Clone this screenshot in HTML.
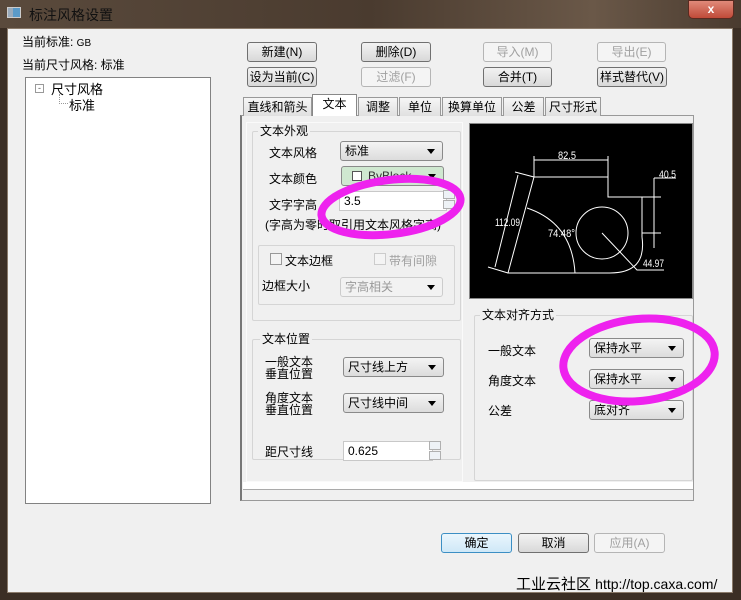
<!DOCTYPE html>
<html><head><meta charset="utf-8"><style>
*{box-sizing:border-box;margin:0;padding:0}
body{width:741px;height:600px;overflow:hidden;background:#3b2e24;font-family:"Liberation Sans","Noto Sans CJK SC",sans-serif;font-size:12px;color:#000;position:relative}
.a{position:absolute}
.title{left:0;top:0;width:741px;height:28px;background:linear-gradient(90deg,#5a4a3c,#4a3b2f 50%,#6a5848 80%,#4a3b2f)}
.client{left:7px;top:28px;width:726px;height:565px;background:#f0f0f0;border:1px solid #8a7a6a}
.btn{position:absolute;height:20px;border:1px solid #707070;border-radius:3px;background:linear-gradient(#f2f2f2,#e6e6e6 50%,#d8d8d8);text-align:center;line-height:18px;font-size:12px}
.dis{color:#a0a0a0;border-color:#b5b5b5;background:#f4f4f4}
.tab{position:absolute;top:97px;height:19px;border:1px solid #999;border-bottom:none;background:linear-gradient(#f6f6f6,#e0e0e0);text-align:center;line-height:18px}
.grp{position:absolute;border:1px solid #d5d5d5;border-radius:2px}
.lg{position:absolute;background:#f0f0f0;padding:0 2px;line-height:14px}
.cb{position:absolute;height:20px;border:1px solid #8a8a8a;border-radius:3px;background:linear-gradient(#f4f4f4,#dcdcdc);line-height:18px;padding-left:4px}
.cb:after{content:"";position:absolute;right:7px;top:7px;border-left:4px solid transparent;border-right:4px solid transparent;border-top:5px solid #000}
.ed{position:absolute;height:20px;background:#fff;border:1px solid #c8c8c8;line-height:18px;padding-left:4px}
.sp{position:absolute;width:12px;height:9px;border:1px solid #b0b0b0;background:#eef2f6}
</style></head><body>
<div class="a title"></div>
<div class="a" style="left:7px;top:7px;width:14px;height:11px;background:linear-gradient(90deg,#9ab 0 40%,#5a9ac8 40%);border:1px solid #ccc"></div>
<div class="a" style="left:29px;top:5px;font-size:14px;color:#111">标注风格设置</div>
<div class="a" style="left:688px;top:0;width:46px;height:19px;border-radius:0 0 5px 5px;background:linear-gradient(#e08a7a,#c04a38);border:1px solid #5a2a20;color:#fff;text-align:center;font-weight:bold;line-height:17px">x</div>
<div class="a client"></div>
<div class="a" style="left:22px;top:33px">当前标准: <span style="font-size:10px">GB</span></div>
<div class="a" style="left:22px;top:56px">当前尺寸风格: 标准</div>
<div class="a" style="left:25px;top:77px;width:186px;height:427px;background:#fff;border:1px solid #828282"></div>
<div class="a" style="left:35px;top:84px;width:9px;height:9px;border:1px solid #999;font-size:9px;line-height:6px;text-align:center;color:#555">-</div>
<div class="a" style="left:51px;top:79px;font-size:13px">尺寸风格</div>
<div class="a" style="left:59px;top:94px;height:10px;border-left:1px dotted #999;border-bottom:1px dotted #999;width:9px"></div>
<div class="a" style="left:69px;top:95px;font-size:13px">标准</div>

<div class="btn" style="left:247px;top:42px;width:70px">新建(N)</div>
<div class="btn" style="left:361px;top:42px;width:70px">删除(D)</div>
<div class="btn dis" style="left:483px;top:42px;width:69px">导入(M)</div>
<div class="btn dis" style="left:597px;top:42px;width:69px">导出(E)</div>
<div class="btn" style="left:247px;top:67px;width:70px">设为当前(C)</div>
<div class="btn dis" style="left:361px;top:67px;width:70px">过滤(F)</div>
<div class="btn" style="left:483px;top:67px;width:69px">合并(T)</div>
<div class="btn" style="left:597px;top:67px;width:70px">样式替代(V)</div>

<div class="a" style="left:240px;top:115px;width:454px;height:386px;border:1px solid #999;border-left:2px solid #777;background:#f0f0f0"></div>
<div class="a" style="left:243px;top:482px;width:450px;height:8px;background:#fff;border-bottom:1px solid #aaa"></div>
<div class="tab" style="left:243px;width:69px">直线和箭头</div>
<div class="tab" style="left:312px;top:94px;height:22px;width:45px;background:#fff;border-color:#888">文本</div>
<div class="tab" style="left:358px;width:40px">调整</div>
<div class="tab" style="left:399px;width:42px">单位</div>
<div class="tab" style="left:442px;width:60px">换算单位</div>
<div class="tab" style="left:503px;width:41px">公差</div>
<div class="tab" style="left:545px;width:56px">尺寸形式</div>

<div class="a" style="left:246px;top:122px;width:217px;height:360px;border:1px solid #fafafa;background:#f0f0f0"></div>
<div class="grp" style="left:252px;top:131px;width:209px;height:190px"></div>
<div class="lg" style="left:258px;top:124px">文本外观</div>
<div class="a" style="left:269px;top:144px">文本风格</div>
<div class="cb" style="left:340px;top:141px;width:103px">标准</div>
<div class="a" style="left:269px;top:170px">文本颜色</div>
<div class="cb" style="left:341px;top:166px;width:103px;background:#cfe8d0;color:#333"><span style="display:inline-block;width:10px;height:10px;border:1px solid #555;background:#fff;margin:0 6px 0 6px;vertical-align:-1px"></span>ByBlock</div>
<div class="a" style="left:269px;top:196px">文字字高</div>
<div class="ed" style="left:339px;top:191px;width:108px">3.5</div>
<div class="sp" style="left:443px;top:190px"></div><div class="sp" style="left:443px;top:200px"></div>
<div class="a" style="left:265px;top:216px">(字高为零时取引用文本风格字高)</div>
<div class="grp" style="left:258px;top:245px;width:197px;height:60px"></div>
<div class="a" style="left:270px;top:253px;width:12px;height:12px;border:1px solid #999;background:#f4f4f4"></div>
<div class="a" style="left:285px;top:252px">文本边框</div>
<div class="a" style="left:374px;top:253px;width:12px;height:12px;border:1px solid #ccc;background:#f4f4f4"></div>
<div class="a" style="left:389px;top:252px;color:#a0a0a0">带有间隙</div>
<div class="a" style="left:262px;top:277px">边框大小</div>
<div class="cb" style="left:340px;top:277px;width:103px;color:#999;background:#f2f2f2;border-color:#ccc">字高相关</div>

<div class="grp" style="left:252px;top:339px;width:209px;height:121px"></div>
<div class="lg" style="left:260px;top:332px">文本位置</div>
<div class="a" style="left:265px;top:356px;line-height:12px">一般文本<br>垂直位置</div>
<div class="cb" style="left:343px;top:357px;width:101px">尺寸线上方</div>
<div class="a" style="left:265px;top:392px;line-height:12px">角度文本<br>垂直位置</div>
<div class="cb" style="left:343px;top:393px;width:101px">尺寸线中间</div>
<div class="a" style="left:265px;top:443px">距尺寸线</div>
<div class="ed" style="left:343px;top:441px;width:90px">0.625</div>
<div class="sp" style="left:429px;top:441px"></div><div class="sp" style="left:429px;top:451px"></div>

<div class="a" style="left:469px;top:123px;width:224px;height:176px;background:#000;border:1px solid #888"></div>
<svg class="a" style="left:469px;top:123px" width="224" height="176" viewBox="0 0 224 176">
<g stroke="#fff" fill="none" stroke-width="1">
<path d="M65 37H139M65 33V54M139 33V74M65 54H139V74H191M173 74V114"/>
<path d="M173 114Q178 150 141 150H39L65 54"/>
<path d="M185 55V125M185 55H207M173 74H192M173 110H192"/>
<path d="M46 49L65 54M19 144L39 150M49 52L26 144"/>
<circle cx="133" cy="110" r="26"/>
<path d="M133 110L168 147H195"/>
<path d="M58 85Q103 100 106 150"/>
</g>
<g fill="#fff" font-family="Liberation Sans Narrow,Liberation Sans,sans-serif" font-size="11">
<text x="89" y="36" textLength="18" lengthAdjust="spacingAndGlyphs">82.5</text>
<text x="190" y="55" textLength="17" lengthAdjust="spacingAndGlyphs">40.5</text>
<text x="26" y="103" textLength="25" lengthAdjust="spacingAndGlyphs">112.09</text>
<text x="79" y="114" textLength="27" lengthAdjust="spacingAndGlyphs">74.48°</text>
<text x="174" y="144" textLength="21" lengthAdjust="spacingAndGlyphs">44.97</text></g>
</svg>

<div class="grp" style="left:474px;top:315px;width:219px;height:166px"></div>
<div class="lg" style="left:480px;top:308px">文本对齐方式</div>
<div class="a" style="left:488px;top:342px">一般文本</div>
<div class="cb" style="left:589px;top:338px;width:95px">保持水平</div>
<div class="a" style="left:488px;top:372px">角度文本</div>
<div class="cb" style="left:589px;top:369px;width:95px">保持水平</div>
<div class="a" style="left:488px;top:402px">公差</div>
<div class="cb" style="left:589px;top:400px;width:95px">底对齐</div>

<svg class="a" style="left:0;top:0" width="741" height="600">
<g fill="none" stroke="#ee22ee" stroke-width="8">
<ellipse cx="391" cy="207" rx="70" ry="27" transform="rotate(-7 391 207)"/>
<ellipse cx="639" cy="360" rx="76" ry="41" transform="rotate(-6 639 360)"/>
</g></svg>

<div class="btn" style="left:441px;top:533px;width:71px;border-color:#3c8fc4;background:linear-gradient(#eaf6fd,#cfe8f7)">确定</div>
<div class="btn" style="left:518px;top:533px;width:71px">取消</div>
<div class="btn dis" style="left:594px;top:533px;width:71px">应用(A)</div>
<div class="a" style="left:516px;top:573px;font-size:15px">工业云社区 <span style="font-size:14px">http://top.caxa.com/</span></div>
</body></html>
